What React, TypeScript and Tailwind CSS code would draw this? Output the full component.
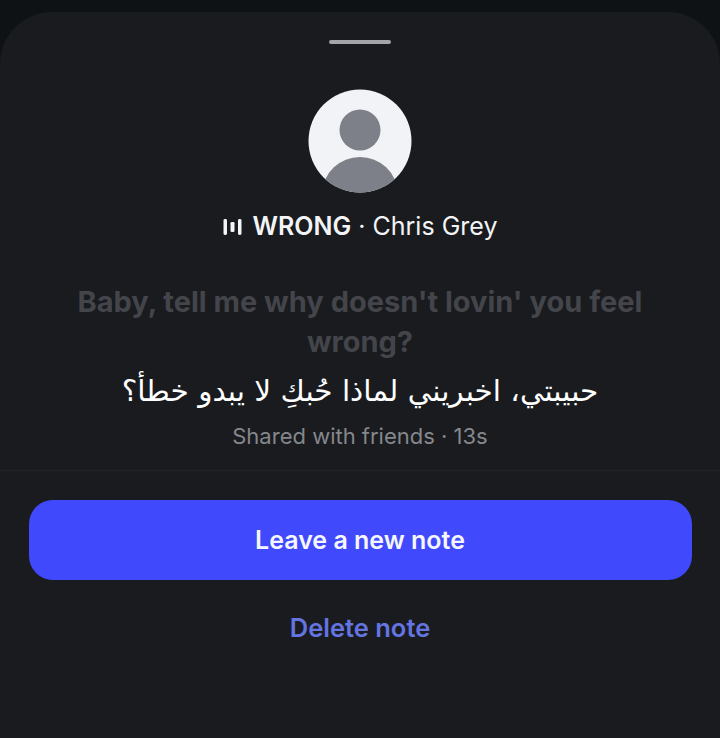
import React from 'react';

function BarsIcon() {
  return (
    <svg width="19" height="18" viewBox="0 0 19 18" fill="#f3f4f6" aria-hidden="true">
      <rect x="0.5" y="1" width="3.5" height="16" rx="1.4" />
      <rect x="7.5" y="4" width="4" height="10" rx="1.2" />
      <rect x="15" y="1" width="3.5" height="16" rx="1.4" />
    </svg>
  );
}

function Avatar() {
  return (
    <svg width="104" height="104" viewBox="0 0 104 104" aria-hidden="true">
      <defs>
        <clipPath id="avatar-clip">
          <circle cx="52" cy="52" r="51.5" />
        </clipPath>
      </defs>
      <circle cx="52" cy="52" r="51.5" fill="#f1f3f6" />
      <circle cx="52" cy="41" r="20.5" fill="#7d8089" />
      <ellipse cx="52" cy="103" rx="37" ry="35" fill="#7d8089" clipPath="url(#avatar-clip)" />
    </svg>
  );
}

export default function App() {
  return (
    <div className="h-[738px] w-[720px] overflow-hidden bg-[#0e1215] pt-3 font-['Inter',sans-serif]">
      <div className="flex h-[726px] flex-col items-center rounded-t-[52px] bg-[#191b1f]">
        <div className="mt-[28px] h-[4px] w-[62px] rounded-full bg-[#a4a5a8]" />
        <div className="mt-[45px] h-[104px]">
          <Avatar />
        </div>
        <div className="mt-[17px] flex h-[34px] items-center text-[25px] text-[#f3f4f6]">
          <BarsIcon />
          <span className="ml-[11px] font-semibold">WRONG</span>
          <span className="ml-[7px]">· Chris Grey</span>
        </div>
        <p className="mt-[38px] w-[600px] text-center text-[29px] leading-[40px] font-bold text-[#43454a]">
          Baby, tell me why doesn't lovin' you feel wrong?
        </p>
        <p
          dir="rtl"
          className="mt-[5px] h-[48px] text-center font-['DejaVu_Sans',sans-serif] text-[29.5px] leading-[48px] text-white"
        >
          حبيبتي، اخبريني لماذا حُبكِ لا يبدو خطأ؟
        </p>
        <p className="mt-[6px] text-[22px] leading-[30px] text-[#85878c]">Shared with friends · 13s</p>
        <div className="mt-[19px] h-px w-full bg-[#212327]" />
        <button className="mt-[29px] h-[80px] w-[663px] rounded-[24px] bg-[#4049fb] pt-[2px] text-[25px] font-semibold text-[#f5f6ff]">
          Leave a new note
        </button>
        <button className="mt-[30px] text-[25.5px] leading-[36px] font-semibold text-[#6474e0]">Delete note</button>
      </div>
    </div>
  );
}
